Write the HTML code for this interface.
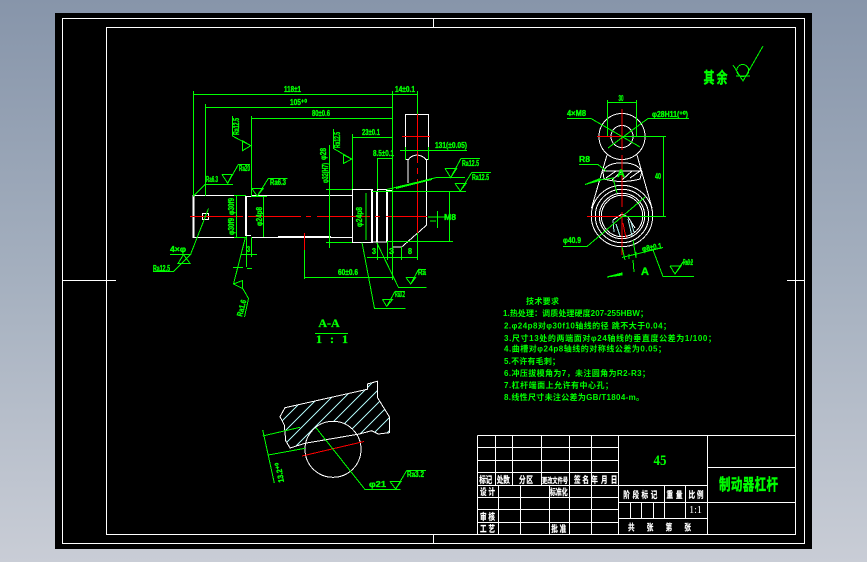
<!DOCTYPE html>
<html><head><meta charset="utf-8"><style>
html,body{margin:0;padding:0;width:867px;height:562px;overflow:hidden;background:linear-gradient(180deg,#8795aa 0%,#a5b0bf 50%,#c9cdd6 100%)}
svg{position:absolute;left:0;top:0}
path,circle,rect{shape-rendering:crispEdges}
text{font-family:"Liberation Sans","Noto Sans CJK SC",sans-serif}
.w{stroke:#fff;fill:none}
.g{stroke:#0f0;fill:none}
.r{stroke:#f00;fill:none}
.t{fill:#0f0;font-weight:bold;font-size:8px;stroke:#0f0;stroke-width:.35}
.p{fill:#0f0;font-size:8px;font-weight:bold}
.tb{fill:#fff;font-weight:bold;font-size:6.6px;text-anchor:middle;stroke:#fff;stroke-width:.15}
</style></head><body>
<svg width="867" height="562" viewBox="0 0 867 562">
<rect x="55" y="13" width="757" height="536" fill="#000"/>
<g class="w" stroke-width="1">
<rect x="62.5" y="18.5" width="742" height="525"/>
<rect x="106.5" y="27.5" width="689" height="507"/>
<path d="M62 280.5H116M787 280.5H804M433.5 18V28M433.5 534V544"/>
</g>

<!-- title block -->
<g class="w" stroke-width="1">
<path d="M477.5 435.5H795.5M477.5 447.5H618.5M477.5 460.5H618.5M477.5 472.5H618.5M477.5 485.5H707.5M477.5 497.5H618.5M477.5 509.5H618.5M477.5 522.5H618.5M618.5 502.5H795.5M618.5 518.5H707.5M707.5 467.5H795.5"/>
<path d="M477.5 435.5V534.5M495.5 435.5V485M512.5 435.5V485M541.5 435.5V485M569.5 435.5V534M591.5 435.5V534M618.5 435.5V534M707.5 435.5V534M498.5 485V534M520.5 485V534M549.5 485V534M664.5 485V518M685.5 485V518M630.5 502V518M641.5 502V518M653.5 502V518"/>
</g>
<text class="tb" transform="translate(485.7,483) scale(1,1.4)" textLength="13" lengthAdjust="spacing">标记</text>
<text class="tb" transform="translate(503.3,483) scale(1,1.4)" textLength="13" lengthAdjust="spacing">处数</text>
<text class="tb" transform="translate(526,483) scale(1,1.4)" textLength="14" lengthAdjust="spacing">分区</text>
<text class="tb" transform="translate(555,483) scale(1,1.4)" font-size="5.2" style="font-size:5.2px">更改文件号</text>
<text class="tb" transform="translate(581.5,483) scale(1,1.4)" textLength="15" lengthAdjust="spacing">签名</text>
<text class="tb" transform="translate(604.3,483) scale(1,1.4)" textLength="26" lengthAdjust="spacing">年月日</text>
<text class="tb" transform="translate(487.5,495) scale(1,1.4)" textLength="15" lengthAdjust="spacing">设计</text>
<text class="tb" transform="translate(558.8,495) scale(1,1.4)" style="font-size:6px">标准化</text>
<text class="tb" transform="translate(487.5,520) scale(1,1.4)" textLength="15" lengthAdjust="spacing">审核</text>
<text class="tb" transform="translate(487.5,532) scale(1,1.4)" textLength="15" lengthAdjust="spacing">工艺</text>
<text class="tb" transform="translate(558.8,532) scale(1,1.4)" textLength="15" lengthAdjust="spacing">批准</text>
<text class="tb" transform="translate(640.3,498) scale(1,1.4)" textLength="34" lengthAdjust="spacing">阶段标记</text>
<text class="tb" transform="translate(674.5,498) scale(1,1.4)" textLength="16" lengthAdjust="spacing">重量</text>
<text class="tb" transform="translate(696,498) scale(1,1.4)" textLength="15" lengthAdjust="spacing">比例</text>
<text x="695.5" y="513" text-anchor="middle" fill="#fff" font-size="10" style="font-family:'Liberation Serif'">1:1</text>
<text class="tb" transform="translate(659.5,530.5) scale(1,1.4)" textLength="63" lengthAdjust="spacing">共张第张</text>
<text transform="translate(660,465) scale(1,1.15)" text-anchor="middle" fill="#0f0" font-size="13" font-weight="bold" style="font-family:'Liberation Serif'">45</text>
<text transform="translate(748.5,490) scale(1,1.4)" text-anchor="middle" fill="#0f0" stroke="#0f0" stroke-width=".3" font-size="11.5" font-weight="bold" textLength="59" lengthAdjust="spacing">制动器杠杆</text>

<!-- front view -->
<g class="w" stroke-width="1">
<path d="M194.5 195.5H245.5M194.5 237.5H245.5"/>
<path d="M193 195V238M194 195V238"/>
<path d="M245 196.5H251M245 235.5H251M245.5 196V236M246.5 196V236"/>
<path d="M251.5 195.5H352.5M251.5 237.5H352.5M278 236.5H331"/>
<path d="M352.5 189.5H372.5V242.5H352.5Z"/>
<path d="M372.5 191.5H377.5V242H372.5ZM371.5 190V242M376.5 191V242"/>
<path d="M377.5 189.5H387V242H377.5Z"/>
<path d="M386.5 190V241.5M387.5 190V241.5"/>
<path d="M387 190.5H392.5M387 241.5H392.5"/>
<path d="M392.5 247H401.7L426.7 225V160M408 183V160"/>
<path d="M405.5 159.5V114.5H428.5V159.5M405.5 159.5H409M425 159.5H428.5"/>
<path d="M408 160Q411 155.5 417 155Q423 155.5 426.5 160"/>
<rect x="202.5" y="213.5" width="6" height="6"/>
</g>
<g class="r" stroke-width="1">
<path d="M190 216.5H243M248 216.5H301M306 216.5H311M317 216.5H370M375 216.5H380M386 216.5H427M417.5 110V163M417.5 168V174M417.5 179V233M402 136.5H430M304.5 233V250"/>
</g>
<g class="g" stroke-width="1">
<path d="M193.5 91V196M205.5 104V196M251.5 116V196M392.5 91V280M417.5 91V114M193 94.5H417.5M205 107.5H392.5M251 118.5H392.5"/>
<path d="M352.5 134V189M352 137.5H392.5M377.5 158V189M377 158.5H392.5M400 150.5H467M405.5 147V160M428.5 147V160"/>
<path d="M329.5 145V248M326 189.5H352M326 242.5H352M372 191.5H466M387 241.5H453M449.5 191V242"/>
<path d="M304.5 250V279M304 277.5H392.5M367 257.5H417.5M377.5 243V260M387.5 242V260M401.5 247V260M417.5 233V260M366 193V240"/>
<path d="M236.5 196V237M263.5 196V237M234 195.5H246M234 237.5H246M251 196.5H267"/>
<!-- surface symbols -->
<path d="M193 196.5L205.3 184.3H233M222 174.5H232L227.7 183.3L222 174.5M227.7 183.3L238.3 164.5H250"/>
<path d="M251.7 188.5H263.3L257.3 196L251.7 188.5M257.3 196L268.3 178.5H287.7"/>
<path d="M232.5 116V136L250.7 145.7L242.5 150.7V140.7L250.7 145.7"/>
<path d="M333.5 129V148.5L351.7 159L343.5 163.5V155L351.7 159"/>
<path d="M436 177.5H465M445 168.5H456.7L450.7 177.5L445 168.5M450.7 177.5L461 158.5H480"/>
<path d="M455 183.5H466L460.3 191L455 183.5M460.3 191L471.7 172.5H491"/>
<path d="M386.7 189.5L436.7 177.5"/>
<path d="M396 188L432 179" stroke-width="2"/>
<path d="M437.5 211V228M428 217H445M430 221H436"/>
<!-- lower-left leaders -->
<path d="M208.5 208.5L190.5 254.5M170 254.5H190.5L173.5 271.5H153M183.5 254.5L178 263.5H190L183.5 254.5"/>
<path d="M245.5 237L233.5 284L242.5 280.5V288.5L233.5 284M242.5 288L248.5 298.5L244.5 317"/>
<path d="M246.5 236V267M251.5 237V257M241 254.5H257M233 267.5H243M247 268.5H252"/>
<!-- lower-right leaders -->
<path d="M362 242.5L374.5 308.5H405.5M382.5 299.5H392.5L386.7 306.5L382.5 299.5M386.7 306.5L395 291.5H405"/>
<path d="M376.7 242.5L398.5 287.5H426.5M406 277.5H415.7L410.7 284L406 277.5M410.7 284L418.5 269.5H426"/>
</g>
<!-- front labels -->
<g class="t">
<text x="284" y="92" textLength="17" lengthAdjust="spacingAndGlyphs">118±1</text>
<text x="290" y="105" textLength="17" lengthAdjust="spacingAndGlyphs">105⁺⁰</text>
<text x="312" y="116" textLength="18" lengthAdjust="spacingAndGlyphs">80±0.6</text>
<text x="362" y="135" textLength="18" lengthAdjust="spacingAndGlyphs">23±0.1</text>
<text x="373" y="156" textLength="21" lengthAdjust="spacingAndGlyphs">8.5±0.1</text>
<text x="395" y="92" textLength="20" lengthAdjust="spacingAndGlyphs">14±0.1</text>
<text x="435" y="148" textLength="32" lengthAdjust="spacingAndGlyphs">131(±0.05)</text>
<text x="338" y="275" textLength="20" lengthAdjust="spacingAndGlyphs">60±0.6</text>
<text x="206" y="182" textLength="12" lengthAdjust="spacingAndGlyphs">Ra6.3</text>
<text x="239" y="171" textLength="11" lengthAdjust="spacingAndGlyphs">Ra20</text>
<text x="270" y="185" textLength="16" lengthAdjust="spacingAndGlyphs">Ra6.3</text>
<text x="462" y="166" textLength="17" lengthAdjust="spacingAndGlyphs">Ra12.5</text>
<text x="472" y="180" textLength="17" lengthAdjust="spacingAndGlyphs">Ra12.5</text>
<text x="418" y="275" textLength="8" lengthAdjust="spacingAndGlyphs">Ra</text>
<text x="395" y="297" textLength="10" lengthAdjust="spacingAndGlyphs">Ra3.2</text>
<text x="153" y="271" textLength="17" lengthAdjust="spacingAndGlyphs">Ra12.5</text>
<text x="170" y="252" textLength="16" lengthAdjust="spacingAndGlyphs">4×φ</text>
<text x="372" y="254" textLength="4" lengthAdjust="spacingAndGlyphs">3</text><text x="389" y="254" textLength="5" lengthAdjust="spacingAndGlyphs">3</text><text x="408" y="254" textLength="4" lengthAdjust="spacingAndGlyphs">8</text>
<text x="247" y="252" textLength="3" lengthAdjust="spacingAndGlyphs">3</text>
<text x="433" y="220" textLength="12" lengthAdjust="spacingAndGlyphs" transform="translate(11,0)">M8</text>
<text transform="translate(239,135) rotate(-90)" textLength="17" lengthAdjust="spacingAndGlyphs">Ra12.5</text>
<text transform="translate(340,148) rotate(-90)" textLength="16" lengthAdjust="spacingAndGlyphs">Ra12.5</text>
<text transform="translate(326,160) rotate(-90)" textLength="12" lengthAdjust="spacingAndGlyphs">φ28</text>
<text transform="translate(328,183) rotate(-90)" textLength="20" lengthAdjust="spacingAndGlyphs">φ32(H7)</text>
<text transform="translate(234,215) rotate(-90)" textLength="17" lengthAdjust="spacingAndGlyphs">φ30f9</text>
<text transform="translate(234,235) rotate(-90)" textLength="17" lengthAdjust="spacingAndGlyphs">φ30f9</text>
<text transform="translate(262,226) rotate(-90)" textLength="19" lengthAdjust="spacingAndGlyphs">φ24p8</text>
<text transform="translate(362,227) rotate(-90)" textLength="20" lengthAdjust="spacingAndGlyphs">φ24p8</text>
<text transform="translate(242,317) rotate(-75)" textLength="17" lengthAdjust="spacingAndGlyphs">Ra1.6</text>
</g>

<!-- side view -->
<g class="w" stroke-width="1">
<circle cx="622" cy="136.5" r="23"/>
<circle cx="622" cy="136.5" r="11"/>
<circle cx="622" cy="216" r="30.7"/>
<circle cx="622" cy="216" r="26.7"/>
<circle cx="622" cy="216" r="22.7"/>
<circle cx="622" cy="216" r="20.7"/>
<path d="M607 155L591.5 208M637 155L652 208"/>
<path d="M604 171C606 160 638 160 641 171M602 171H642M603 172L604 179Q622 184 640 179L642 171"/>
<path d="M606 178L616 171M612 180L622 171M622 180L632 171M630 178L640 171"/>
<path d="M613 220L622 214L628 217L635 228"/>
</g>
<path d="M613 220L614 232M616 224L620 236M631 222L634 232M628 219L632 236" stroke="#aee" fill="none"/>
<g class="r" stroke-width="1">
<path d="M622 109V150M622 155V207M622 212V255M597 136.5H647M587 216.5H657M623 223L626 238"/>
</g>
<g class="g" stroke-width="1">
<path d="M607.5 100V136M636.5 100V136M607 102.5H637M663.5 136V217M622 136.5H666M622 216.5H666"/>
<path d="M567 118.5H591L640 147M689 118.5H648L608 148M579 164.5H598L606 171M563 246.5H587L645 197"/>
<path d="M600 180L613 178L617 193M634 272L633 260M622 257.5L663 247.5M629 254V259M636 252V258M653 250L663 276.5H694M670 266H681L675 274L670 266M675 274L683 262H693"/>
<path d="M633 240L636 258M622 247L625 260"/>
<path d="M733 65L743 81L763 46"/>
<circle cx="742.7" cy="70.5" r="6"/>
<path d="M736 76H750"/>
</g>
<path d="M585 184.5L600 180.5L600 178.5Z" fill="#0f0" stroke="#0f0"/>
<path d="M607 277L622 273L622 275Z" fill="#0f0" stroke="#0f0"/>
<g class="t">
<text x="621" y="101" text-anchor="middle" textLength="5" lengthAdjust="spacingAndGlyphs">30</text>
<text x="567" y="116" textLength="19" lengthAdjust="spacingAndGlyphs">4×M8</text>
<text x="652" y="117" textLength="36" lengthAdjust="spacingAndGlyphs">φ28H11(⁺⁰)</text>
<text x="579" y="162" textLength="11" lengthAdjust="spacingAndGlyphs">R8</text>
<text x="617" y="177" font-size="11" style="font-size:11px">A</text>
<text x="641" y="275" font-size="11" style="font-size:11px">A</text>
<text x="563" y="243" textLength="18" lengthAdjust="spacingAndGlyphs">φ40.9</text>
<text x="642" y="250" textLength="20" lengthAdjust="spacingAndGlyphs" transform="rotate(-10 652 248)">φ8±0.1</text>
<text x="683" y="265" textLength="10" lengthAdjust="spacingAndGlyphs">Ra3.2</text>
<text x="655" y="179" textLength="6" lengthAdjust="spacingAndGlyphs">40</text>
</g>
<text transform="translate(715.5,83) scale(1,1.4)" text-anchor="middle" fill="#0f0" stroke="#0f0" stroke-width=".3" font-size="11" font-weight="bold" textLength="24" lengthAdjust="spacing">其余</text>

<!-- technical requirements -->
<g class="p">
<text x="526" y="304" textLength="33" lengthAdjust="spacing">技术要求</text>
<text x="503" y="316" textLength="145" lengthAdjust="spacing">1.热处理：调质处理硬度207-255HBW；</text>
<text x="504" y="328.5" textLength="167" lengthAdjust="spacing">2.φ24p8对φ30f10轴线的径 跳不大于0.04；</text>
<text x="504" y="341" textLength="212" lengthAdjust="spacing">3.尺寸13处的两端面对φ24轴线的垂直度公差为1/100；</text>
<text x="504" y="351.5" textLength="162" lengthAdjust="spacing">4.曲槽对φ24p8轴线的对称线公差为0.05；</text>
<text x="504" y="364" textLength="56" lengthAdjust="spacing">5.不许有毛刺；</text>
<text x="504" y="376" textLength="146" lengthAdjust="spacing">6.冲压拔模角为7，未注圆角为R2-R3；</text>
<text x="504" y="388" textLength="109" lengthAdjust="spacing">7.杠杆端面上允许有中心孔；</text>
<text x="504" y="400" textLength="140" lengthAdjust="spacing">8.线性尺寸未注公差为GB/T1804-m。</text>
</g>

<!-- section A-A -->
<text x="329" y="327" text-anchor="middle" fill="#0f0" stroke="#0f0" stroke-width=".3" font-size="12" font-weight="bold" style="font-family:'Liberation Serif'">A-A</text>
<path d="M315 333.5H348" class="g"/>
<text x="316" y="343" fill="#0f0" stroke="#0f0" stroke-width=".3" font-size="12" font-weight="bold" textLength="32" lengthAdjust="spacing" style="font-family:'Liberation Serif'">1 : 1</text>
<defs><clipPath id="c"><path d="M285 407.7L367.3 389.3V384L377.3 381.3V397.3L389.3 416.7V432.7L378.3 434L371.7 430.7L359.3 434L305 443.3L290 448L285.7 440.7L284.3 425L280 416.7Z"/></clipPath></defs>
<g clip-path="url(#c)" stroke="#aee" fill="none">
<path d="M190 500L350 340M203 500L363 340M216 500L376 340M229 500L389 340M242 500L402 340M255 500L415 340M268 500L428 340M281 500L441 340M294 500L454 340M307 500L467 340M320 500L480 340M333 500L493 340"/>
</g>
<circle cx="333" cy="449.3" r="28" fill="#000" stroke="#fff"/>
<path class="w" d="M305 443.3L359.3 434L371.7 430.7L378.3 434L389.3 432.7V416.7L377.3 397.3V381.3L367.3 384V389.3L285 407.7L280 416.7L284.3 425L285.7 440.7L290 448L305 443.3Z"/>
<path class="r" d="M302 456L364 441.5"/>
<g class="g">
<path d="M316 427.7L365 489.5H400.7M262.7 436L300 427.3M268.3 455L305 448.3M262.7 430L274.3 483M390 481.5H401L395.7 489L390 481.5M395.7 489L406.7 470.5H426"/>
</g>
<g class="t">
<text x="369" y="487" textLength="17" lengthAdjust="spacingAndGlyphs">φ21</text>
<text x="407" y="477" textLength="17" lengthAdjust="spacingAndGlyphs">Ra3.2</text>
<text transform="translate(284,482) rotate(-100)" textLength="20" lengthAdjust="spacingAndGlyphs">13.2⁺⁰</text>
</g>
</svg>
</body></html>
